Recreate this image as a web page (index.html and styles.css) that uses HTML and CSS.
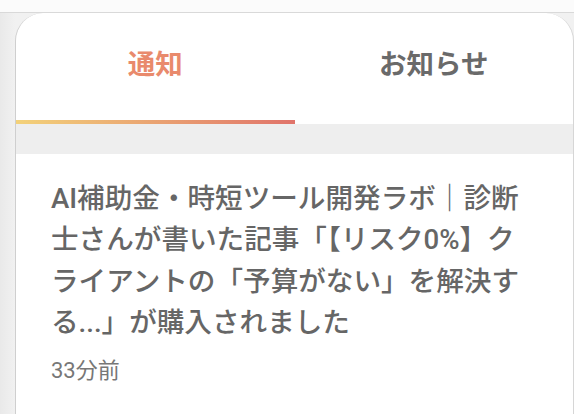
FILE: index.html
```html
<!DOCTYPE html>
<html lang="ja">
<head>
<meta charset="utf-8">
<link rel="stylesheet" href="styles.css">
</head>
<body>
<div class="topbar"></div>
<div class="stage">
  <div class="sheet">
    <div class="tabs">
      <div class="tab active">通知</div>
      <div class="tab">お知らせ</div>
    </div>
    <div class="gap"></div>
    <div class="item">
      <p class="item-title">AI補助金・時短ツール開発ラボ｜診断士さんが書いた記事「【リスク0%】クライアントの「予算がない」を解決する...」が購入されました</p>
      <p class="item-time">33分前</p>
    </div>
  </div>
</div>
</body>
</html>
```

FILE: styles.css
```css
html, body {
  margin: 0;
  padding: 0;
}
body {
  width: 574px;
  height: 414px;
  overflow: hidden;
  background: #fafafa;
  font-family: "Roboto", "Noto Sans CJK JP", sans-serif;
}
.topbar {
  height: 12px;
  background: #fbfbfb;
  border-bottom: 1px solid #d9d9d9;
}
.stage {
  background: linear-gradient(90deg, #e9e9e9, #f1f1f1 15px);
  padding-left: 15px;
  height: 401px;
}
.sheet {
  background: #fff;
  border-left: 1px solid #cfcfcf;
  border-right: 1px solid #d6d6d6;
  border-top-left-radius: 28px;
  border-top-right-radius: 28px;
  height: 100%;
  box-sizing: border-box;
}
.tabs {
  display: grid;
  grid-template-columns: 1fr 1fr;
  height: 111px;
}
.tab {
  display: flex;
  align-items: center;
  justify-content: center;
  padding-bottom: 10px;
  box-sizing: border-box;
  font-size: 27.5px;
  font-weight: 700;
  color: #6a6a6a;
  border-bottom: 4px solid transparent;
}
.tab.active {
  color: #e98a6c;
  border-image: linear-gradient(90deg, #f3d27a, #e0736a) 1;
}
.gap {
  height: 30px;
  background: #eeeeee;
}
.item {
  padding: 24px 35px 0 35px;
}
.item-title {
  margin: 0;
  font-size: 27.6px;
  line-height: 41.4px;
  font-weight: 500;
  color: #666666;
}
.item-time {
  margin: 13px 0 0;
  font-size: 22px;
  line-height: 28px;
  color: #777777;
}
```
